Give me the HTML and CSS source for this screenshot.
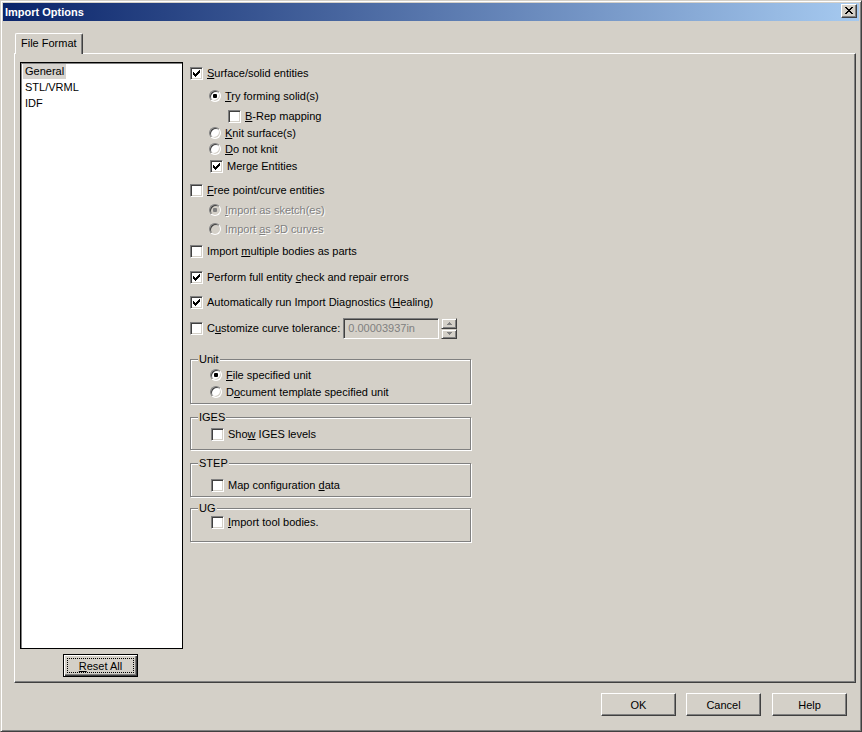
FILE: index.html
```html
<!DOCTYPE html>
<html>
<head>
<meta charset="utf-8">
<title>Import Options</title>
<link rel="stylesheet" href="styles.css">
</head>
<body>
<div class="window">
  <div class="titlebar">
    <span class="title">Import Options</span>
    <span class="close"><svg width="8" height="7" viewBox="0 0 8 7" shape-rendering="crispEdges"><path d="M0 0h2v1H0z M6 0h2v1H6z M1 1h2v1H1z M5 1h2v1H5z M2 2h4v1H2z M3 3h2v1H3z M2 4h4v1H2z M1 5h2v1H1z M5 5h2v1H5z M0 6h2v1H0z M6 6h2v1H6z" fill="#000"/></svg></span>
  </div>
  <div class="client">
    <div class="tabs"><div class="tab">File Format</div></div>
    <div class="pane">
      <div class="sidebar">
        <div class="listbox">
          <div class="item"><span class="sel">General</span></div>
          <div class="item"><span>STL/VRML</span></div>
          <div class="item"><span>IDF</span></div>
        </div>
        <button class="btn default reset"><u>R</u>eset All</button>
      </div>
      <div class="options">
        <div class="row"><span class="cb"><svg width="7" height="7" viewBox="0 0 7 7" shape-rendering="crispEdges"><path d="M0 2h1v3H0z M1 3h1v3H1z M2 4h1v3H2z M3 3h1v3H3z M4 2h1v3H4z M5 1h1v3H5z M6 0h1v3H6z"/></svg></span><span class="lbl"><u>S</u>urface/solid entities</span></div>
        <div class="row ind-r g7"><span class="rb on"></span><span class="lbl"><u>T</u>ry forming solid(s)</span></div>
        <div class="row ind-c2 g4"><span class="cb"></span><span class="lbl"><u>B</u>-Rep mapping</span></div>
        <div class="row ind-r g1"><span class="rb"></span><span class="lbl"><u>K</u>nit surface(s)</span></div>
        <div class="row ind-r"><span class="rb"></span><span class="lbl"><u>D</u>o not knit</span></div>
        <div class="row ind-c g1"><span class="cb"><svg width="7" height="7" viewBox="0 0 7 7" shape-rendering="crispEdges"><path d="M0 2h1v3H0z M1 3h1v3H1z M2 4h1v3H2z M3 3h1v3H3z M4 2h1v3H4z M5 1h1v3H5z M6 0h1v3H6z"/></svg></span><span class="lbl">Merge Entities</span></div>
        <div class="row g8"><span class="cb"></span><span class="lbl"><u>F</u>ree point/curve entities</span></div>
        <div class="row ind-r g4 disabled"><span class="rb on"></span><span class="lbl"><u>I</u>mport as sketch(es)</span></div>
        <div class="row ind-r g3 disabled"><span class="rb"></span><span class="lbl">Import <u>a</u>s 3D curves</span></div>
        <div class="row g6"><span class="cb"></span><span class="lbl">Import <u>m</u>ultiple bodies as parts</span></div>
        <div class="row g10"><span class="cb"><svg width="7" height="7" viewBox="0 0 7 7" shape-rendering="crispEdges"><path d="M0 2h1v3H0z M1 3h1v3H1z M2 4h1v3H2z M3 3h1v3H3z M4 2h1v3H4z M5 1h1v3H5z M6 0h1v3H6z"/></svg></span><span class="lbl">Perform full entity <u>c</u>heck and repair errors</span></div>
        <div class="row g9"><span class="cb"><svg width="7" height="7" viewBox="0 0 7 7" shape-rendering="crispEdges"><path d="M0 2h1v3H0z M1 3h1v3H1z M2 4h1v3H2z M3 3h1v3H3z M4 2h1v3H4z M5 1h1v3H5z M6 0h1v3H6z"/></svg></span><span class="lbl">Automatically run Import Diagnostics (<u>H</u>ealing)</span></div>
        <div class="row tall g8"><span class="cb"></span><span class="lbl">C<u>u</u>stomize curve tolerance:</span>
          <span class="edit">0.00003937in</span>
          <span class="spin">
            <span class="spinbtn"><svg width="5" height="3" viewBox="0 0 5 3" shape-rendering="crispEdges"><path d="M2 0h1v1H2z M1 1h3v1H1z M0 2h5v1H0z" fill="#808080"/></svg></span>
            <span class="spinbtn"><svg width="5" height="3" viewBox="0 0 5 3" shape-rendering="crispEdges"><path d="M0 0h5v1H0z M1 1h3v1H1z M2 2h1v1H2z" fill="#808080"/></svg></span>
          </span>
        </div>

        <div class="group unit">
          <div class="legend">Unit</div>
          <div class="row gi-r g1"><span class="rb on"></span><span class="lbl"><u>F</u>ile specified unit</span></div>
          <div class="row gi-r g1"><span class="rb"></span><span class="lbl">D<u>o</u>cument template specified unit</span></div>
        </div>
        <div class="group iges">
          <div class="legend">IGES</div>
          <div class="row gi-c g2"><span class="cb"></span><span class="lbl">Sho<u>w</u> IGES levels</span></div>
        </div>
        <div class="group step">
          <div class="legend">STEP</div>
          <div class="row gi-c g7"><span class="cb"></span><span class="lbl">Map configuration <u>d</u>ata</span></div>
        </div>
        <div class="group ug">
          <div class="legend">UG</div>
          <div class="row gi-c gm1"><span class="cb"></span><span class="lbl"><u>I</u>mport tool bodies.</span></div>
        </div>
      </div>
    </div>
    <div class="footer">
      <button class="btn">OK</button>
      <button class="btn">Cancel</button>
      <button class="btn help">Help</button>
    </div>
  </div>
</div>
</body>
</html>
```

FILE: styles.css
```css
html, body {
  margin: 0;
  padding: 0;
  background: #d4d0c8;
}
body {
  font-family: "Liberation Sans", Arial, sans-serif;
  font-size: 11px;
  color: #000;
  overflow: hidden;
}
.window {
  width: 862px;
  height: 732px;
  box-sizing: border-box;
  border: 1px solid;
  border-color: #d4d0c8 #404040 #404040 #d4d0c8;
  box-shadow: inset 1px 1px 0 #fff, inset -1px -1px 0 #808080;
  padding: 2px;
  display: flex;
  flex-direction: column;
  background: #d4d0c8;
}
.titlebar {
  height: 18px;
  flex: none;
  display: flex;
  align-items: flex-start;
  justify-content: space-between;
  background: linear-gradient(to right, #0a246a, #a6caf0);
  color: #fff;
  font-weight: bold;
  padding: 0 2px;
}
.title {
  line-height: 18px;
  font-size: 11px;
}
.close {
  box-sizing: border-box;
  width: 16px;
  height: 14px;
  margin-top: 1px;
  background: #d4d0c8;
  border: 1px solid;
  border-color: #fff #404040 #404040 #fff;
  box-shadow: inset -1px -1px 0 #808080;
  display: flex;
  align-items: center;
  justify-content: center;
}
.close svg { margin-left: -1px; margin-top: -1px; }
.client {
  flex: 1;
  display: flex;
  flex-direction: column;
  padding: 12px 3px 0 11px;
}
.tabs {
  display: flex;
  padding-left: 1px;
  margin-bottom: -1px;
  position: relative;
  z-index: 1;
}
.tab {
  box-sizing: border-box;
  height: 21px;
  padding: 0 5px;
  line-height: 19px;
  border: 1px solid;
  border-bottom: none;
  border-color: #fff #404040 #404040 #fff;
  box-shadow: inset -1px 0 0 #808080;
  border-radius: 2px 2px 0 0;
  background: #d4d0c8;
}
.pane {
  box-sizing: border-box;
  height: 630px;
  flex: none;
  border: 1px solid;
  border-color: #fff #404040 #404040 #fff;
  box-shadow: inset -1px -1px 0 #808080;
  display: flex;
  align-items: flex-start;
  padding: 8px 0 0 5px;
}
.sidebar {
  width: 163px;
  flex: none;
  display: flex;
  flex-direction: column;
}
.listbox {
  box-sizing: border-box;
  width: 163px;
  height: 587px;
  background: #fff;
  border: 1px solid #000;
  box-shadow: inset 1px 1px 0 #808080;
  padding-top: 1px;
}
.item {
  height: 16px;
  line-height: 15px;
}
.item span {
  display: inline-block;
  padding: 0 2px;
  margin-left: 2px;
}
.item .sel {
  background: #d6d3ce;
}
.btn {
  box-sizing: border-box;
  width: 75px;
  height: 23px;
  background: #d4d0c8;
  border: 1px solid;
  border-color: #fff #404040 #404040 #fff;
  box-shadow: inset -1px -1px 0 #808080;
  font-family: inherit;
  font-size: 11px;
  color: #000;
  padding: 0;
  margin: 0;
}
.btn.default {
  border-color: #000;
  box-shadow: inset 1px 1px 0 #fff, inset -1px -1px 0 #404040, inset -2px -2px 0 #808080;
  outline: 1px dotted #000;
  outline-offset: -5px;
}
.reset {
  margin-top: 5px;
  margin-left: 43px;
}
.options {
  margin-left: 7px;
  padding-top: 3px;
  display: flex;
  flex-direction: column;
  align-items: flex-start;
}
.row {
  display: flex;
  align-items: center;
  height: 16px;
  white-space: nowrap;
  line-height: 13px;
}
.row.tall { height: 21px; }
.lbl { margin-left: 4px; }
.disabled .lbl {
  color: #808080;
  text-shadow: 1px 1px 0 #fff;
}
.ind-r { padding-left: 19px; }
.ind-c { padding-left: 20px; }
.ind-c2 { padding-left: 38px; }
.gi-r { padding-left: 19px; }
.gi-c { padding-left: 20px; }
.g1 { margin-top: 1px; }
.g2 { margin-top: 2px; }
.g3 { margin-top: 3px; }
.g4 { margin-top: 4px; }
.g6 { margin-top: 6px; }
.g7 { margin-top: 7px; }
.g8 { margin-top: 8px; }
.g9 { margin-top: 9px; }
.g10 { margin-top: 10px; }
.gm1 { margin-top: -1px; }
.cb {
  box-sizing: border-box;
  width: 13px;
  height: 13px;
  flex: none;
  border: 1px solid;
  border-color: #808080 #fff #fff #808080;
  box-shadow: inset 1px 1px 0 #404040, inset -1px -1px 0 #d4d0c8;
  background: #fff;
  display: flex;
  align-items: center;
  justify-content: center;
}
.cb svg { fill: #000; }
.rb {
  box-sizing: border-box;
  width: 12px;
  height: 12px;
  flex: none;
  border-radius: 50%;
  border: 1px solid;
  border-color: #808080 #fff #fff #808080;
  box-shadow: inset 1px 1px 0 #404040, inset -1px -1px 0 #d4d0c8;
  background: #fff;
  position: relative;
}
.rb.on::after {
  content: "";
  position: absolute;
  left: 3px;
  top: 3px;
  width: 4px;
  height: 4px;
  border-radius: 1px;
  background: #000;
}
.disabled .rb { background: #d4d0c8; }
.disabled .rb.on::after { background: #808080; }
.edit {
  box-sizing: border-box;
  width: 96px;
  height: 21px;
  margin-left: 3px;
  border: 1px solid;
  border-color: #808080 #fff #fff #808080;
  box-shadow: inset 1px 1px 0 #404040, inset -1px -1px 0 #d4d0c8;
  background: #d4d0c8;
  color: #808080;
  line-height: 19px;
  padding-left: 4px;
}
.spin {
  width: 16px;
  height: 21px;
  margin-left: 2px;
  display: flex;
  flex-direction: column;
}
.spinbtn {
  box-sizing: border-box;
  flex: 1;
  border: 1px solid;
  border-color: #d4d0c8 #404040 #404040 #d4d0c8;
  box-shadow: inset 1px 1px 0 #fff, inset -1px -1px 0 #808080;
  background: #d4d0c8;
  display: flex;
  align-items: center;
  justify-content: center;
}
.group {
  box-sizing: border-box;
  width: 281px;
  border: 1px solid #808080;
  box-shadow: 1px 1px 0 #fff, inset 1px 1px 0 #fff;
  display: flex;
  flex-direction: column;
  align-items: flex-start;
}
.legend {
  margin: -8px 0 0 7px;
  padding: 0 1px;
  line-height: 14px;
  height: 14px;
  background: #d4d0c8;
}
.unit { margin-top: 20px; padding-bottom: 3px; }
.iges { margin-top: 13px; padding-bottom: 7px; }
.step { margin-top: 13px; padding-bottom: 3px; }
.ug { margin-top: 11px; padding-bottom: 11px; }
.footer {
  display: flex;
  justify-content: flex-end;
  gap: 10px;
  padding: 10px 9px 0 0;
}
.help { margin-left: 1px; }
```
